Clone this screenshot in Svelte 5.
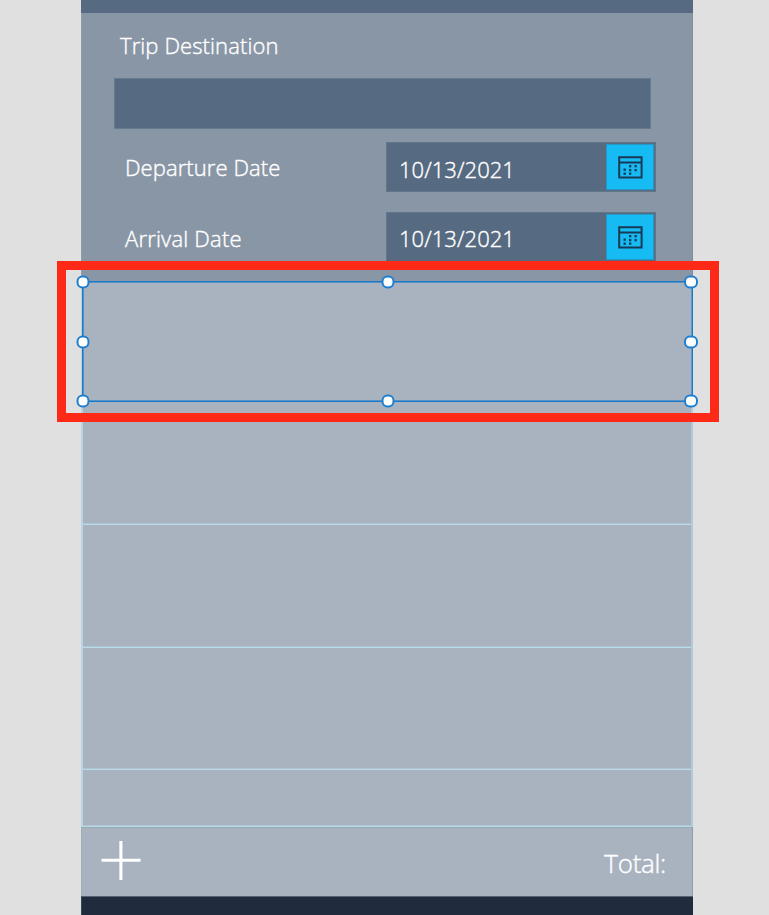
<script>
  const trips = [
    { label: 'Departure Date', value: '10/13/2021' },
    { label: 'Arrival Date', value: '10/13/2021' }
  ];
  const rows = [122, 123, 122, 57];
  const handles = [
    [0, 0], [50, 0], [100, 0],
    [0, 50], [100, 50],
    [0, 100], [50, 100], [100, 100]
  ];
  const dots = [
    [11, 9], [16.5, 9], [11, 13], [16.5, 13],
    [5.5, 12.5], [5.5, 16.5], [11, 16.5]
  ];
</script>

<div class="canvas">
  <div class="phone">
    <div class="topbar"></div>
    <div class="form">
      <div class="title"><span>Trip Destination</span></div>
      <div class="field"></div>
      {#each trips as trip, i}
        <div class="date-row">
          <span class="label" class:second={i === 1}>{trip.label}</span>
          <div class="picker">
            <span class="date" class:second={i === 1}>{trip.value}</span>
            <div class="button">
              <svg width="25" height="23" viewBox="0 0 25 23">
                <path d="M1.2 1.2H23.6V21.5H1.2ZM1.2 6.6H23.6" fill="none" stroke="#173a55" stroke-width="2" />
                {#each dots as [x, y]}
                  <rect x={x} y={y} width="2.3" height="2.3" fill="#173a55" />
                {/each}
              </svg>
            </div>
          </div>
        </div>
      {/each}
    </div>
    <div class="gallery">
      <div class="template"></div>
      {#each rows as h}
        <div class="row" style="height: {h}px"></div>
      {/each}
    </div>
    <div class="footer">
      <svg class="plus" width="40" height="40" viewBox="0 0 40 40">
        <path d="M0.5 20.2H39.5M19.9 1V40" stroke="#fff" stroke-width="3.1" />
      </svg>
      <span class="total">Total:</span>
    </div>
    <div class="bottombar"></div>
  </div>

  <div class="callout"></div>
  <div class="selection">
    {#each handles as [x, y]}
      <i class="handle" class:wide={x === 100} style="left: {x}%; top: {y}%"></i>
    {/each}
  </div>
</div>

<style>
  :global(body) { margin: 0; background: #e0e0e0; }
  .canvas {
    position: relative;
    width: 769px;
    height: 915px;
    overflow: hidden;
    background: #e0e0e0;
    font-family: "Open Sans", "Noto Sans", sans-serif;
    font-weight: 300;
    -webkit-text-stroke: 0.4px #fff;
    color: #fff;
  }
  .canvas * { box-sizing: border-box; }
  .phone {
    display: flex;
    flex-direction: column;
    width: 612px;
    height: 915px;
    margin-left: 81px;
  }
  .topbar { height: 13px; background: #566a81; }
  .form {
    height: 268px;
    padding-left: 33px;
    background: #8996a6;
    border-left: 1px solid #919daa;
    border-right: 1px solid #7e8c9c;
    font-size: 22px;
    white-space: nowrap;
  }
  .title {
    height: 65px;
    line-height: 64px;
    padding-left: 5px;
    letter-spacing: 0.1px;
  }
  .field {
    width: 537px;
    height: 51px;
    margin: 0 0 13px -1px;
    background: #566a81;
    border: 1px solid #677b90;
  }
  .date-row {
    display: flex;
    height: 51px;
    margin-bottom: 19px;
  }
  .label {
    width: 271px;
    padding-left: 10px;
    line-height: 50px;
    letter-spacing: 0.08px;
  }
  .picker {
    display: flex;
    width: 270px;
    height: 50px;
    background: #566a81;
    border: 1px solid #62768a;
  }
  .date {
    flex: 1;
    padding-left: 12px;
    line-height: 52px;
    letter-spacing: 0.05px;
  }
  .label.second { line-height: 52px; letter-spacing: 0.2px; }
  .date.second { line-height: 50px; }
  .button {
    width: 48px;
    height: 46px;
    margin: 1px 1px 0 0;
    padding: 11px 0 0 11px;
    background: #17bbf4;
    border: 1px solid #2897c5;
  }
  .button svg, .plus { display: block; }
  .gallery {
    height: 546px;
    background: #a9b3bf;
    border-left: 2px solid #b6d4e2;
    border-right: 2px solid #b0cbd8;
  }
  .template { height: 122px; }
  .row { border-bottom: 1px solid #b8dce8; box-shadow: inset 0 -1px #afc4d0; }
  .footer {
    display: flex;
    justify-content: space-between;
    height: 69px;
    padding: 12px 26px 0 19px;
    background: #a9b3bf;
    border-top: 1px solid #98a9b6;
    border-left: 1px solid #a0acb6;
    border-right: 1px solid #8f9dab;
  }
  .total {
    font-size: 26px;
    line-height: 46px;
    letter-spacing: -0.3px;
  }
  .bottombar {
    height: 19px;
    background: #202c3e;
    border-top: 1px solid #566472;
    border-left: 1px solid #3b4655;
  }
  .callout {
    position: absolute;
    left: 57px;
    top: 261px;
    width: 662px;
    height: 161px;
    border: 9px solid #ff2917;
  }
  .selection {
    position: absolute;
    left: 82px;
    top: 281px;
    width: 611px;
    height: 121px;
    border: 1px solid #1878ca;
    box-shadow: inset 0 0 0 1px #1878ca90;
  }
  .handle {
    position: absolute;
    width: 13px;
    height: 13px;
    background: #fff;
    border: 2px solid #1e7fd0;
    border-radius: 6px;
    transform: translate(-50%, -50%);
  }
  .handle.wide { width: 14px; margin-left: -1px; }
</style>
